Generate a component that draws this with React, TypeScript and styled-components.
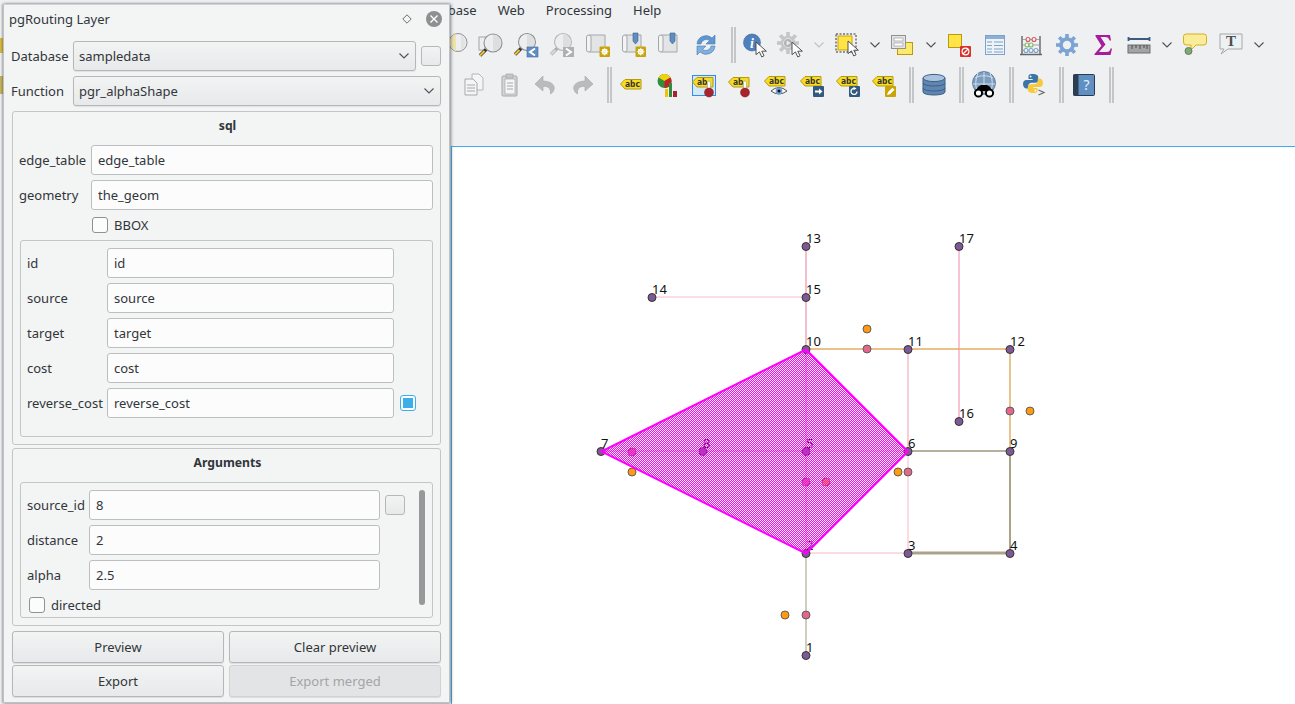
import React from "react";
import styled, { createGlobalStyle } from "styled-components";

const Global = createGlobalStyle`
  html, body { margin: 0; padding: 0; background: #eff0f1; overflow: hidden; }
  #root { width: 1295px; height: 704px; }
`;

const FONT = `"Noto Sans", "Open Sans", sans-serif`;
const INK = "#31363b";

const Page = styled.div`
  position: relative;
  width: 1295px;
  height: 704px;
  overflow: hidden;
  display: flex;
  flex-direction: column;
  background: #eff0f1;
  font: 13px/18px ${FONT};
  color: ${INK};
`;

const MenuBar = styled.div`
  display: flex;
  gap: 21px;
  height: 20px;
  margin-bottom: 7px;
  padding-left: 419px;
  line-height: 20px;
`;

const ToolRow = styled.div`
  display: flex;
  align-items: center;
  height: 36px;
  margin-bottom: 4px;
`;

const ToolCell = styled.div`
  flex: none;
  width: 36px;
  height: 36px;
  display: flex;
  align-items: center;
  justify-content: center;
  position: relative;
  svg { display: block; overflow: visible; position: relative; }
`;

const Highlight = styled.div`
  position: absolute;
  left: 6px;
  top: 8px;
  width: 22px;
  height: 19px;
  background: #d5e8f6;
  border: 1px solid #2f8fe6;
`;

const DropCell = styled.div`
  flex: none;
  width: 20px;
  height: 36px;
  display: flex;
  align-items: center;
  justify-content: center;
`;

const ToolSep = styled.div<{ $w?: number }>`
  flex: none;
  box-sizing: border-box;
  width: ${(p) => p.$w ?? 14}px;
  height: 36px;
  padding-left: 7px;
  display: flex;
  gap: 1px;
  &::before, &::after {
    content: "";
    width: 2px;
    height: 36px;
    background: #c4c6c8;
  }
`;

const EdgeStub = styled.div<{ $c: string; $h: number; $gap: number }>`
  flex: none;
  width: 3px;
  height: ${(p) => p.$h}px;
  background: ${(p) => p.$c};
  margin-right: ${(p) => p.$gap}px;
`;

const Spacer = styled.div`
  height: 39px;
`;

const Canvas = styled.div`
  flex: 1;
  margin-left: 451px;
  background: #fff;
  border-top: 1px solid #3daee9;
  border-left: 1px solid #3daee9;
  min-height: 0;
  svg { display: block; }
`;

const MapLabel = styled.text`
  font: 13px ${FONT};
  fill: #111;
`;

/* ---- dialog ---- */
const Dialog = styled.div`
  position: absolute;
  left: 3px;
  top: 4px;
  width: 447px;
  height: 699px;
  box-sizing: border-box;
  padding: 0 8px;
  background: #f3f4f4;
  border: 1px solid #bfc1c2;
  border-top-color: #d0d2d3;
  box-shadow: 1px 0 3px rgba(40, 50, 60, 0.55), -1px 0 2px rgba(40, 50, 60, 0.3);
  display: flex;
  flex-direction: column;
`;

const TitleBar = styled.div`
  height: 36px;
  box-sizing: border-box;
  padding-top: 5px;
  display: flex;
  align-items: flex-start;
`;

const Title = styled.div`
  flex: 1;
  margin-left: -3px;
  line-height: 18px;
`;

const PinGlyph = styled.svg`
  margin: 4px 14px 0 0;
`;

const CloseGlyph = styled.svg`
  margin: 1px -1px 0 0;
`;

const Row = styled.div`
  display: flex;
  align-items: center;
  height: 30px;
  margin-bottom: 5px;
`;

const TopLabel = styled.div`
  width: 62px;
  margin-left: -1px;
  flex: none;
  white-space: nowrap;
`;

const Combo = styled.div<{ $gap?: number }>`
  flex: 1;
  height: 30px;
  box-sizing: border-box;
  margin-right: ${(p) => p.$gap ?? 0}px;
  padding: 0 6px 0 5px;
  display: flex;
  align-items: center;
  justify-content: space-between;
  border: 1px solid #b5b7b8;
  border-radius: 3px;
  background: linear-gradient(#f2f3f3, #e8e9ea);
  box-shadow: 0 1px 1px rgba(0, 0, 0, 0.08);
`;

const SmallButton = styled.div`
  flex: none;
  width: 20px;
  height: 20px;
  box-sizing: border-box;
  border: 1px solid #b5b7b8;
  border-radius: 3px;
  background: linear-gradient(#f2f3f3, #e8e9ea);
  justify-self: end;
`;

const Group = styled.section<{ $mt?: number }>`
  box-sizing: border-box;
  margin-top: ${(p) => p.$mt ?? 0}px;
  border: 1px solid #c3c5c6;
  border-radius: 3px;
  padding: 0 7px 7px;
`;

const GroupTitle = styled.div`
  height: 33px;
  line-height: 27px;
  text-align: center;
  font-weight: 700;
  font-size: 12.2px;
  margin-left: 2px;
`;

const FieldRow = styled.div`
  display: flex;
  height: 30px;
  align-items: center;
  margin-bottom: 5px;
`;

const FieldLabel = styled.label<{ $w: number; $ml?: number }>`
  flex: none;
  width: ${(p) => p.$w}px;
  margin-left: ${(p) => p.$ml ?? 0}px;
  white-space: nowrap;
`;

const TextInput = styled.input`
  box-sizing: border-box;
  width: 100%;
  min-width: 0;
  height: 30px;
  padding: 0 6px;
  margin: 0;
  border: 1px solid #bcbebf;
  border-radius: 3px;
  outline: none;
  background: #fcfcfc;
  color: ${INK};
  font: 13px ${FONT};
`;

const CheckRow = styled.div<{ $mb: number; $ml: number }>`
  display: flex;
  align-items: center;
  gap: 6px;
  height: 16px;
  margin: 7px 0 ${(p) => p.$mb}px ${(p) => p.$ml}px;
`;

const Check = styled.span<{ $on?: boolean }>`
  flex: none;
  position: relative;
  width: 16px;
  height: 16px;
  box-sizing: border-box;
  border: 1px solid ${(p) => (p.$on ? "#3daee9" : "#8f9193")};
  border-radius: 3px;
  background: #fcfcfc;
  justify-self: end;
  ${(p) =>
    p.$on &&
    `&::after { content: ""; position: absolute; inset: 2px; background: #3daee9; }`}
`;

const Inner = styled.div<{ $h: number }>`
  position: relative;
  box-sizing: border-box;
  height: ${(p) => p.$h}px;
  overflow: hidden;
  border: 1px solid #c3c5c6;
  border-radius: 3px;
  padding: 7px 0 0 6px;
`;

const Grid = styled.div<{ $cols: string }>`
  display: grid;
  grid-template-columns: ${(p) => p.$cols};
  grid-auto-rows: 30px;
  row-gap: 5px;
  align-items: center;
  label { white-space: nowrap; }
`;

const ScrollThumb = styled.div`
  position: absolute;
  left: 398px;
  top: 7px;
  width: 6px;
  height: 115px;
  border-radius: 3px;
  background: #96989a;
`;

const Buttons = styled.div`
  display: grid;
  grid-template-columns: 1fr 1fr;
  grid-auto-rows: 32px;
  column-gap: 5px;
  row-gap: 2px;
  margin-top: 5px;
`;

const PushButton = styled.div<{ $off?: boolean }>`
  display: flex;
  align-items: center;
  justify-content: center;
  border: 1px solid ${(p) => (p.$off ? "#d0d2d3" : "#b5b7b8")};
  border-radius: 3px;
  background: ${(p) => (p.$off ? "#e3e4e5" : "linear-gradient(#f2f3f3, #e8e9ea)")};
  color: ${(p) => (p.$off ? "#a3a5a7" : INK)};
  box-shadow: 0 1px 1px rgba(0, 0, 0, 0.1);
`;

/* ---- small drawings ---- */
const Svg24 = ({ children }: { children: React.ReactNode }) => (
  <svg width="24" height="24" viewBox="0 0 24 24">{children}</svg>
);

const Chevron = ({ c = "#4d5257", w = 10 }: { c?: string; w?: number }) => (
  <svg width={w} height="6" viewBox="0 0 10 6">
    <path d="M0.5 0.5 L5 5 L9.5 0.5" fill="none" stroke={c} strokeWidth="1.1" />
  </svg>
);

const Lens = ({ x, y, r = 8.5, grey }: { x: number; y: number; r?: number; grey?: boolean }) => (
  <>
    <circle cx={x} cy={y} r={r} fill="#eceeef" stroke={grey ? "#b4b6b8" : "#8d9092"} strokeWidth="1.1" />
    <path d={`M${x} ${y - r + 1} A${r - 1} ${r - 1} 0 0 1 ${x} ${y + r - 1} Z`} fill="#dcdedf" />
  </>
);

const Handle = ({ x, y, grey }: { x: number; y: number; grey?: boolean }) => (
  <>
    <path d={`M${x} ${y} L${x - 6} ${y + 6}`} stroke={grey ? "#a8aaac" : "#333"} strokeWidth="3.4" />
    <path d={`M${x - 1.5} ${y + 1.5} L${x - 6} ${y + 6}`} stroke={grey ? "#d8d9da" : "#f2c230"} strokeWidth="2.2" />
  </>
);

const Scroll = () => (
  <>
    <path d="M3 2 H19 V19 H3 Z" fill="#e3e4e5" stroke="#a4a6a8" />
    <path d="M3 2 Q0.5 2 0.5 4 V17 Q0.5 19 3 19 Q5 19 5 17 V4 Q5 2 3 2Z" fill="#f2f3f3" stroke="#a4a6a8" />
  </>
);

const Pin = ({ x }: { x: number }) => (
  <path d={`M${x} 0 h5 v8 l-2.5 3 l-2.5 -3 Z`} fill="#5d8fc6" stroke="#3f5f80" strokeWidth=".6" />
);

const GoldBadge = () => (
  <>
    <rect x="13.5" y="13.5" width="10.5" height="10.5" rx="1" fill="#c9a30a" />
    <circle cx="18.7" cy="18.7" r="2.2" fill="none" stroke="#fff" strokeWidth="1.4" />
    <path d="M18.7 14.8V22.6M14.8 18.7H22.6M16 16L21.4 21.4M21.4 16L16 21.4" stroke="#fff" strokeWidth=".8" />
  </>
);

const Cursor = ({ x, y }: { x: number; y: number }) => (
  <path
    transform={`translate(${x} ${y}) scale(1.15)`}
    d="M0 0 L0 11 L3 8.6 L5 13 L7 12 L5 8 L9 8 Z"
    fill="#fff"
    stroke="#444"
    strokeWidth=".8"
  />
);

const GearShape = ({ cx, cy, r, c, sw }: { cx: number; cy: number; r: number; c: string; sw: number }) => (
  <>
    {[0, 45, 90, 135, 180, 225, 270, 315].map((a) => (
      <rect key={a} x={cx - 1.8} y={cy - r - 4} width="3.6" height="5" fill={c} transform={`rotate(${a} ${cx} ${cy})`} />
    ))}
    <circle cx={cx} cy={cy} r={r - 1} fill="none" stroke={c} strokeWidth={sw} />
  </>
);

const Tag = ({ text, x = 0, y = 4, w = 21 }: { text: string; x?: number; y?: number; w?: number }) => (
  <g transform={`translate(${x} ${y})`}>
    <path d={`M0.5 5 L5 0.5 H${w} V10 H5 Z`} fill="#f7dc1f" stroke="#b79a10" strokeWidth="1" />
    <text x="5" y="8" fontFamily={FONT} fontSize="8.5" fontWeight="700" fill="#333">{text}</text>
  </g>
);

const RedPin = ({ x, y }: { x: number; y: number }) => (
  <>
    <rect x={x - 1.5} y={y - 9} width="3" height="8" rx="1.5" fill="#fff" stroke="#999" strokeWidth=".6" />
    <circle cx={x} cy={y + 2.5} r="4.5" fill="#a8232b" stroke="#7a1a20" strokeWidth=".5" />
  </>
);

const I = {
  zoomPartial: (
    <Svg24>
      <circle cx="16" cy="9.5" r="9" fill="#eceeef" stroke="#8d9092" />
      <path d="M14 1 A9 9 0 0 0 14 18 Z" fill="#efe3ac" />
      <path d="M19 2 A9 9 0 0 1 19 17 Z" fill="#e0e2e3" />
    </Svg24>
  ),
  zoomSel: (
    <Svg24>
      <rect x="1" y="4" width="11" height="13" fill="#eceeef" stroke="#a2a4a6" />
      <Lens x={15} y={10} r={9} />
      <Handle x={8} y={16.5} />
    </Svg24>
  ),
  zoomLast: (
    <Svg24>
      <Lens x={13} y={9} />
      <Handle x={7} y={15.5} />
      <rect x="13" y="14" width="11" height="10" fill="#5f8dc4" stroke="#42699a" strokeWidth=".6" />
      <path d="M21 15.5 L16 19 L21 22.5" fill="none" stroke="#fff" strokeWidth="2" />
    </Svg24>
  ),
  zoomNext: (
    <Svg24>
      <Lens x={13} y={9} grey />
      <Handle x={7} y={15.5} grey />
      <rect x="13" y="14" width="11" height="10" fill="#aeb0b2" />
      <path d="M16 15.5 L21 19 L16 22.5" fill="none" stroke="#fff" strokeWidth="2" />
    </Svg24>
  ),
  bm1: (<Svg24><Scroll /><GoldBadge /></Svg24>),
  bm2: (<Svg24><Scroll /><Pin x={11} /><GoldBadge /></Svg24>),
  bm3: (<Svg24><Scroll /><Pin x={12} /></Svg24>),
  refresh: (
    <Svg24>
      <path d="M3 11 A9 9 0 0 1 18 5 L21 2 V11 H12 L15.5 7.5 A5.5 5.5 0 0 0 7 11 Z" fill="#5f97d0" stroke="#4a7bb0" strokeWidth=".6" />
      <path d="M21 13 A9 9 0 0 1 6 19 L3 22 V13 H12 L8.5 16.5 A5.5 5.5 0 0 0 17 13 Z" fill="#7fb0de" stroke="#4a7bb0" strokeWidth=".6" />
    </Svg24>
  ),
  identify: (
    <Svg24>
      <circle cx="9" cy="9.5" r="8.5" fill="#4d80bd" stroke="#3c6799" strokeWidth=".6" />
      <text x="7" y="14.5" fontFamily="Liberation Serif, serif" fontStyle="italic" fontWeight="700" fontSize="14" fill="#fff">i</text>
      <Cursor x={13} y={9} />
    </Svg24>
  ),
  action: (
    <Svg24>
      <GearShape cx={9} cy={10} r={7} c="#c4c6c8" sw={2.5} />
      <circle cx="9" cy="10" r="4" fill="#b0b2b4" />
      <path d="M7.6 7.6 L11.6 10 L7.6 12.4Z" fill="#eee" />
      <Cursor x={13} y={9} />
    </Svg24>
  ),
  select: (
    <Svg24>
      <rect x="1" y="1" width="20" height="18" fill="none" stroke="#333" strokeDasharray="2 1.5" />
      <rect x="3" y="3" width="14" height="14" fill="#ffe347" stroke="#c9a30a" />
      <Cursor x={13} y={8} />
    </Svg24>
  ),
  form: (
    <Svg24>
      <rect x="6.5" y="9.5" width="15" height="12" fill="#fde96c" stroke="#b79a10" />
      <rect x="0.5" y="2.5" width="14" height="13" fill="#e4e5e6" stroke="#8f9193" />
      <rect x="3" y="5" width="9" height="3" fill="#fff" stroke="#8f9193" strokeWidth=".6" />
      <rect x="3" y="10" width="9" height="3" fill="#fff" stroke="#8f9193" strokeWidth=".6" />
    </Svg24>
  ),
  deselect: (
    <Svg24>
      <rect x="1.5" y="1.5" width="13" height="13" fill="#ffe347" stroke="#b79a10" />
      <rect x="13" y="13" width="11" height="11" rx="1" fill="#d9312c" />
      <circle cx="18.5" cy="18.5" r="3.4" fill="none" stroke="#fff" strokeWidth="1.2" />
      <path d="M16 21 L21 16" stroke="#fff" strokeWidth="1.2" />
    </Svg24>
  ),
  table: (
    <Svg24>
      <rect x="2.5" y="2.5" width="19" height="19" fill="#eef3f8" stroke="#7aa2cc" />
      <rect x="3" y="3" width="18" height="3" fill="#8db0d6" />
      <path d="M4 9H9M11 9H20M4 12.5H9M11 12.5H20M4 16H9M11 16H20M4 19H9M11 19H20" stroke="#7aa2cc" />
    </Svg24>
  ),
  abacus: (
    <Svg24>
      <path d="M3 3V22M21 3V22M1 21.5H23" stroke="#666" strokeWidth="1.4" fill="none" />
      <path d="M3 6.5H21M3 12H21M3 17.5H21" stroke="#888" strokeWidth=".7" />
      {[[9, 6.5, "#d05a5a"], [15, 6.5, "#d05a5a"], [8, 12, "#7fba6c"], [12, 12, "#7fba6c"], [7, 17.5, "#7aa2cc"], [12, 17.5, "#7aa2cc"], [17, 17.5, "#7aa2cc"]].map(([x, y, c]) => (
        <circle key={`${x}-${y}`} cx={x as number} cy={y as number} r="2" fill="#f4f4f4" stroke={c as string} strokeWidth="1.1" />
      ))}
    </Svg24>
  ),
  gear: (
    <Svg24>
      <GearShape cx={12} cy={12} r={7} c="#7ba3d4" sw={3.6} />
    </Svg24>
  ),
  sigma: (
    <Svg24>
      <path d="M4.5 2 H19 L20 7.5 L18.6 7.5 C18 5 16.5 4 14 4 H9.5 L14.5 11.5 L8 19 H15.5 C18 19 19 18 19.6 15.5 L21 15.5 L19.5 22 H3.5 V21 L10.5 12.8 L4.5 3.2 Z" fill="#a51c9c" />
    </Svg24>
  ),
  ruler: (
    <Svg24>
      <path d="M1.5 4V8M22.5 4V8M1.5 6H22.5" stroke="#3e5a80" strokeWidth="1.8" />
      <rect x="1" y="12" width="22" height="8" fill="#a2a4a6" stroke="#6b6d6f" />
      <path d="M5 12V16M9 12V15M13 12V16M17 12V15M20 12V16" stroke="#4a4c4e" />
    </Svg24>
  ),
  callout: (
    <Svg24>
      <path d="M3 1 H21 Q23.5 1 23.5 3.5 V9 Q23.5 12 21 12 H13 L8 17 V12 H3 Q0.5 12 0.5 9 V3.5 Q0.5 1 3 1Z" fill="#fbec99" stroke="#d5b11e" />
      <circle cx="5.5" cy="18" r="3.5" fill="#7fa97a" stroke="#5e7f5a" />
    </Svg24>
  ),
  textNote: (
    <Svg24>
      <path d="M1 1 H23 V16 H9 L2 21 L5 16 H1 Z" fill="#ecf1f4" stroke="#a6a8aa" />
      <text x="12" y="13" textAnchor="middle" fontFamily="Liberation Serif, serif" fontWeight="700" fontSize="15" fill="#4d4f51">T</text>
    </Svg24>
  ),
  copy: (
    <Svg24>
      <path d="M10 1 H17 L21 5 V17 H10 Z" fill="#f4f5f5" stroke="#b4b6b8" />
      <path d="M3 6 H11 L15 10 V22 H3 Z" fill="#f4f5f5" stroke="#a6a8aa" />
      <path d="M5 12H13M5 15H13M5 18H13" stroke="#a6a8aa" />
    </Svg24>
  ),
  paste: (
    <Svg24>
      <rect x="4" y="3" width="15" height="20" rx="1" fill="#d4d6d7" stroke="#a6a8aa" />
      <rect x="7" y="6" width="10" height="15" fill="#f4f5f5" stroke="#a6a8aa" strokeWidth=".7" />
      <rect x="8" y="1" width="7" height="4" fill="#c4c6c8" stroke="#a6a8aa" strokeWidth=".7" />
      <path d="M9 10H15M9 13H15M9 16H15" stroke="#a6a8aa" />
    </Svg24>
  ),
  undo: (
    <Svg24>
      <path d="M9 3 L1 11 L9 18 V13.5 C14 13 17 15 16.5 21 C22 18 23 8.5 9 8 Z" fill="#b9bbbd" stroke="#a6a8aa" strokeWidth=".6" />
    </Svg24>
  ),
  redo: (
    <Svg24>
      <path d="M15 3 L23 11 L15 18 V13.5 C10 13 7 15 7.5 21 C2 18 1 8.5 15 8 Z" fill="#b9bbbd" stroke="#a6a8aa" strokeWidth=".6" />
    </Svg24>
  ),
  labels: (<Svg24><Tag text="abc" y={6} /></Svg24>),
  diagram: (
    <Svg24>
      <circle cx="8.5" cy="8" r="7" fill="#2f8f3a" />
      <path d="M8.5 8 L2.5 4.4 A7 7 0 0 1 14.5 4.4Z" fill="#f2d20a" />
      <path d="M8.5 8 L14.5 4.4 A7 7 0 0 1 8.5 15Z" fill="#c4222a" />
      <rect x="9" y="16" width="3" height="8" fill="#f2c20a" />
      <rect x="13" y="10" width="3" height="14" fill="#2f8f3a" />
      <rect x="17" y="18" width="4" height="6" fill="#a8232b" />
    </Svg24>
  ),
  pinned: (<Svg24><Tag text="ab" y={4} /><RedPin x={17} y={17} /></Svg24>),
  eye: (
    <Svg24>
      <Tag text="abc" y={3} />
      <path d="M7 18 Q15 11 23 18 Q15 24 7 18Z" fill="#fff" stroke="#555" />
      <circle cx="15" cy="18" r="3.4" fill="#6fa3d8" />
      <circle cx="15" cy="18" r="1.5" fill="#111" />
    </Svg24>
  ),
  move: (
    <Svg24>
      <Tag text="abc" y={3} />
      <rect x="13" y="13" width="11" height="11" rx="1" fill="#34597f" />
      <path d="M15 17.4H19V15.4L22.5 18.5L19 21.6V19.6H15Z" fill="#fff" />
    </Svg24>
  ),
  rotate: (
    <Svg24>
      <Tag text="abc" y={3} />
      <rect x="13" y="13" width="11" height="11" rx="1" fill="#34597f" />
      <path d="M21 18.5 A3 3 0 1 1 18.5 15.5" fill="none" stroke="#fff" strokeWidth="1.3" />
      <path d="M17.5 13.8 L20.6 15.5 L17.5 17.2Z" fill="#fff" />
    </Svg24>
  ),
  edit: (
    <Svg24>
      <Tag text="abc" y={3} />
      <rect x="13" y="13" width="11" height="11" rx="1" fill="#c9a30a" />
      <path d="M15 22 L16 19 L20.5 14.8 L22.6 16.8 L18 21.2Z" fill="#fff" />
    </Svg24>
  ),
  db: (
    <Svg24>
      <path d="M1 5 V19 C1 23 23 23 23 19 V5 Z" fill="#5f86b3" stroke="#3e5f85" />
      <ellipse cx="12" cy="5" rx="11" ry="3.6" fill="#a9c2de" stroke="#3e5f85" />
      <path d="M1 10 C1 14 23 14 23 10M1 15 C1 19 23 19 23 15" fill="none" stroke="#3e5f85" />
    </Svg24>
  ),
  globe: (
    <Svg24>
      <circle cx="12" cy="10" r="11.5" fill="#7d9dc0" stroke="#40607f" strokeWidth=".6" />
      <path d="M3 5C8 2 16 2 21 5M1 11H23M12 -1V20M6 0C3 8 3 14 6 19M18 0C21 8 21 14 18 19" fill="none" stroke="#d8e4ee" strokeWidth=".9" />
      <path d="M6 14 L9 12 H15 L18 14 L20 18 H4Z" fill="#000" />
      <circle cx="6.5" cy="20" r="3.6" fill="#fff" stroke="#000" strokeWidth="2" />
      <circle cx="17.5" cy="20" r="3.6" fill="#fff" stroke="#000" strokeWidth="2" />
    </Svg24>
  ),
  python: (
    <Svg24>
      <path d="M10.5 1C6.5 1 6.5 2.7 6.5 4V6H10.7V7H4.5C2.5 7 1 8.4 1 11S2.5 15.5 4.5 15.5H6.2V13C6.2 11.2 7.7 9.7 9.5 9.7H13.5C15 9.7 16.2 8.5 16.2 7V4C16.2 2.4 14.5 1 10.5 1Z" fill="#3a75a8" />
      <circle cx="8.6" cy="3.5" r=".9" fill="#fff" />
      <path d="M11.5 20C15.5 20 15.5 18.3 15.5 17V15H11.3V14H17.5C19.5 14 21 12.6 21 10S19.5 5.5 17.5 5.5H15.8V8C15.8 9.8 14.3 11.3 12.5 11.3H8.5C7 11.3 5.8 12.5 5.8 14V17C5.8 18.6 7.5 20 11.5 20Z" fill="#f8c93c" />
      <circle cx="13.4" cy="17.5" r=".9" fill="#fff" />
      <path d="M16.5 17 L22 19.5 L16.5 22" fill="none" stroke="#666" strokeWidth="1.2" />
    </Svg24>
  ),
  help: (
    <Svg24>
      <rect x="1.5" y="1.5" width="21" height="21" rx="1" fill="#608fc4" stroke="#2a3a4a" />
      <rect x="1.5" y="1.5" width="5" height="21" fill="#2c3e50" />
      <text x="14.5" y="17" textAnchor="middle" fontFamily={FONT} fontSize="14" fill="#e8f0f8">?</text>
    </Svg24>
  ),
};

/* ---- map data, coordinates are page pixels ---- */
const N: Record<string, [number, number]> = {
  "1": [806, 655], "2": [806, 553], "3": [908, 553], "4": [1010, 553], "5": [806, 451],
  "6": [908, 451], "7": [601, 451], "8": [703, 451], "9": [1010, 451], "10": [806, 349],
  "11": [908, 349], "12": [1010, 349], "13": [806, 246], "14": [652, 297], "15": [806, 297],
  "16": [959, 421], "17": [959, 246],
};
const EDGES: [string, string, string, number][] = [
  ["13", "15", "#f3a9bd", 1.5], ["15", "10", "#f3a9bd", 1.5], ["14", "15", "#f8bccd", 1],
  ["16", "17", "#fbc3d2", 2], ["10", "11", "#e3ad62", 1.5], ["11", "12", "#e3ad62", 1.5],
  ["12", "9", "#e8c48e", 2], ["9", "4", "#aca28a", 2], ["3", "4", "#aca28a", 3],
  ["6", "9", "#b8b09b", 2], ["2", "3", "#fbd0da", 1.5], ["3", "6", "#fbd0da", 1.5],
  ["6", "11", "#f7bccb", 1.5], ["2", "1", "#c4bdad", 1.5], ["10", "5", "#b5ad9b", 1.2],
  ["5", "2", "#e8b0a8", 1.2], ["7", "8", "#b5ad9b", 1.2], ["8", "5", "#b5ad9b", 1.2], ["5", "6", "#e8c0a8", 1.2],
];
const PINK: [number, number][] = [[867, 349], [1010, 411], [908, 472], [806, 615], [806, 482], [632, 452]];
const ORANGE: [number, number][] = [[867, 329], [1030, 411], [898, 472], [785, 615], [826, 482], [632, 472]];

const MapView = () => (
  <svg width="843" height="556" viewBox="452 148 843 556">
    <defs>
      <pattern id="hatch" width="2" height="2" patternUnits="userSpaceOnUse">
        <rect width="1" height="1" fill="#ff00ff" shapeRendering="crispEdges" />
        <rect x="1" y="1" width="1" height="1" fill="#ff00ff" shapeRendering="crispEdges" />
      </pattern>
    </defs>
    <g transform="translate(0 1)">
      {EDGES.map(([a, b, c, w]) => (
        <line key={a + b} x1={N[a][0]} y1={N[a][1]} x2={N[b][0]} y2={N[b][1]} stroke={c} strokeWidth={w} />
      ))}
      {PINK.map(([x, y]) => (
        <circle key={`${x}${y}`} cx={x} cy={y} r="4" fill="#e2688b" stroke="#555" strokeWidth=".9" />
      ))}
      {ORANGE.map(([x, y]) => (
        <circle key={`${x}${y}`} cx={x} cy={y} r="4" fill="#ff9a12" stroke="#555" strokeWidth=".9" />
      ))}
      {Object.entries(N).map(([k, [x, y]]) => (
        <circle key={k} cx={x} cy={y + 0.5} r="4" fill="#7d5a94" stroke="#333" strokeWidth="1" />
      ))}
      {Object.entries(N).map(([k, [x, y]]) => (
        <MapLabel key={k} x={x} y={y - 3}>{k}</MapLabel>
      ))}
    </g>
    <polygon
      points="601.5,452.5 806,350.5 908,452.5 806,554.5"
      fill="url(#hatch)"
      stroke="#ff00ff"
      strokeWidth="2"
    />
  </svg>
);

const T = ({ i, on }: { i: React.ReactNode; on?: boolean }) => (
  <ToolCell>
    {on && <Highlight />}
    {i}
  </ToolCell>
);

const Drop = ({ off }: { off?: boolean }) => (
  <DropCell>
    <Chevron c={off ? "#bfc1c3" : "#4d5257"} />
  </DropCell>
);

export default function App() {
  return (
    <Page>
      <Global />
      <MenuBar>
        <span>Database</span>
        <span>Web</span>
        <span>Processing</span>
        <span>Help</span>
      </MenuBar>
      <ToolRow>
        <EdgeStub $c="#d9bb3a" $h={15} $gap={433} />
        <T i={I.zoomPartial} />
        <T i={I.zoomSel} />
        <T i={I.zoomLast} />
        <T i={I.zoomNext} />
        <T i={I.bm1} />
        <T i={I.bm2} />
        <T i={I.bm3} />
        <T i={I.refresh} />
        <ToolSep $w={13} />
        <T i={I.identify} />
        <T i={I.action} />
        <Drop off />
        <T i={I.select} />
        <Drop />
        <T i={I.form} />
        <Drop />
        <T i={I.deselect} />
        <T i={I.table} />
        <T i={I.abacus} />
        <T i={I.gear} />
        <T i={I.sigma} />
        <T i={I.ruler} />
        <Drop />
        <T i={I.callout} />
        <T i={I.textNote} />
        <Drop />
      </ToolRow>
      <ToolRow>
        <EdgeStub $c="#c9b45a" $h={18} $gap={453} />
        <T i={I.copy} />
        <T i={I.paste} />
        <T i={I.undo} />
        <T i={I.redo} />
        <ToolSep />
        <T i={I.labels} />
        <T i={I.diagram} />
        <T i={I.pinned} on />
        <T i={I.pinned} />
        <T i={I.eye} />
        <T i={I.move} />
        <T i={I.rotate} />
        <T i={I.edit} />
        <ToolSep />
        <T i={I.db} />
        <ToolSep />
        <T i={I.globe} />
        <ToolSep />
        <T i={I.python} />
        <ToolSep />
        <T i={I.help} />
        <ToolSep />
      </ToolRow>
      <Spacer />
      <Canvas>
        <MapView />
      </Canvas>

      <Dialog>
        <TitleBar>
          <Title>pgRouting Layer</Title>
          <PinGlyph width="10" height="10" viewBox="0 0 10 10">
            <path d="M5 .8 L9.2 5 L5 9.2 L.8 5 Z" fill="none" stroke="#5b6064" strokeWidth=".9" />
          </PinGlyph>
          <CloseGlyph width="16" height="16" viewBox="0 0 16 16">
            <circle cx="8" cy="8" r="8" fill="#8d8f91" />
            <path d="M4.5 4.5 L11.5 11.5 M11.5 4.5 L4.5 11.5" stroke="#fff" strokeWidth="1.4" />
          </CloseGlyph>
        </TitleBar>

        <Row>
          <TopLabel>Database</TopLabel>
          <Combo $gap={5}>
            <span>sampledata</span>
            <Chevron />
          </Combo>
          <SmallButton />
        </Row>
        <Row>
          <TopLabel>Function</TopLabel>
          <Combo>
            <span>pgr_alphaShape</span>
            <Chevron />
          </Combo>
        </Row>

        <Group>
          <GroupTitle>sql</GroupTitle>
          <FieldRow>
            <FieldLabel $w={72} $ml={-1}>edge_table</FieldLabel>
            <TextInput readOnly value="edge_table" />
          </FieldRow>
          <FieldRow>
            <FieldLabel $w={72} $ml={-1}>geometry</FieldLabel>
            <TextInput readOnly value="the_geom" />
          </FieldRow>
          <CheckRow $mb={7} $ml={72}>
            <Check />
            <span>BBOX</span>
          </CheckRow>
          <Inner $h={197}>
            <Grid $cols="80px 287px 22px">
              <label>id</label>
              <TextInput readOnly value="id" />
              <span />
              <label>source</label>
              <TextInput readOnly value="source" />
              <span />
              <label>target</label>
              <TextInput readOnly value="target" />
              <span />
              <label>cost</label>
              <TextInput readOnly value="cost" />
              <span />
              <label>reverse_cost</label>
              <TextInput readOnly value="reverse_cost" />
              <Check $on />
            </Grid>
          </Inner>
        </Group>

        <Group $mt={3}>
          <GroupTitle>Arguments</GroupTitle>
          <Inner $h={136}>
            <Grid $cols="62px 291px 25px">
              <label>source_id</label>
              <TextInput readOnly value="8" />
              <SmallButton />
              <label>distance</label>
              <TextInput readOnly value="2" />
              <span />
              <label>alpha</label>
              <TextInput readOnly value="2.5" />
              <span />
            </Grid>
            <CheckRow $mb={0} $ml={2}>
              <Check />
              <span>directed</span>
            </CheckRow>
            <ScrollThumb />
          </Inner>
        </Group>

        <Buttons>
          <PushButton>Preview</PushButton>
          <PushButton>Clear preview</PushButton>
          <PushButton>Export</PushButton>
          <PushButton $off>Export merged</PushButton>
        </Buttons>
      </Dialog>
    </Page>
  );
}
